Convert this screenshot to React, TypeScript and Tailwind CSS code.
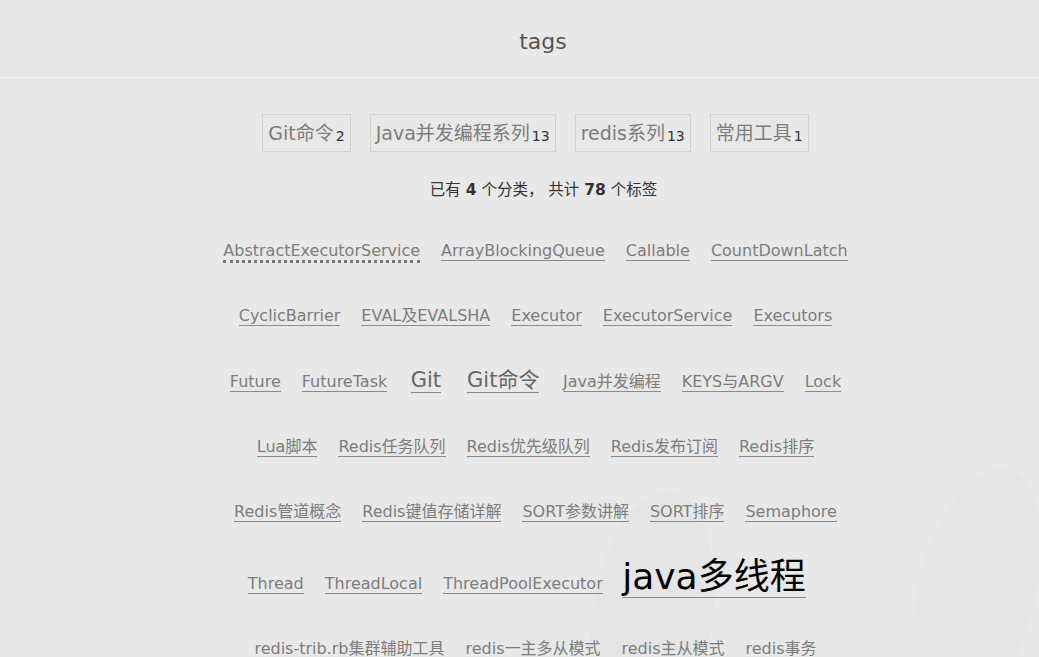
const categories = [
  { name: "Git命令", count: 2 },
  { name: "Java并发编程系列", count: 13 },
  { name: "redis系列", count: 13 },
  { name: "常用工具", count: 1 },
];

type Tag = { name: string; size?: "md" | "lg"; dotted?: boolean };

const tagRows: Tag[][] = [
  [
    { name: "AbstractExecutorService", dotted: true },
    { name: "ArrayBlockingQueue" },
    { name: "Callable" },
    { name: "CountDownLatch" },
  ],
  [
    { name: "CyclicBarrier" },
    { name: "EVAL及EVALSHA" },
    { name: "Executor" },
    { name: "ExecutorService" },
    { name: "Executors" },
  ],
  [
    { name: "Future" },
    { name: "FutureTask" },
    { name: "Git", size: "md" },
    { name: "Git命令", size: "md" },
    { name: "Java并发编程" },
    { name: "KEYS与ARGV" },
    { name: "Lock" },
  ],
  [
    { name: "Lua脚本" },
    { name: "Redis任务队列" },
    { name: "Redis优先级队列" },
    { name: "Redis发布订阅" },
    { name: "Redis排序" },
  ],
  [
    { name: "Redis管道概念" },
    { name: "Redis键值存储详解" },
    { name: "SORT参数讲解" },
    { name: "SORT排序" },
    { name: "Semaphore" },
  ],
  [
    { name: "Thread" },
    { name: "ThreadLocal" },
    { name: "ThreadPoolExecutor" },
    { name: "java多线程", size: "lg" },
  ],
  [
    { name: "redis-trib.rb集群辅助工具" },
    { name: "redis一主多从模式" },
    { name: "redis主从模式" },
    { name: "redis事务" },
  ],
];

function TagLink({ tag }: { tag: Tag }) {
  const sizeClass =
    tag.size === "lg"
      ? "text-[36px] text-black pl-[9px] pr-[28px]"
      : tag.size === "md"
        ? "text-[21px] text-[#666] px-[13px]"
        : "text-[16px] text-[#7d7d7d] px-[10.5px]";
  return (
    <div className={`leading-[65px] ${sizeClass}`}>
      <a
        href="#"
        className={`leading-none ${
          tag.dotted ? "border-b-[3px] border-dotted border-[#777]" : "border-b border-[#8a8a8a]"
        }`}
      >
        {tag.name}
      </a>
    </div>
  );
}

export default function App() {
  return (
    <div
      className="relative min-h-[657px] bg-[#e8e8e8] overflow-hidden"
      style={{ fontFamily: '"DejaVu Sans", "Noto Sans CJK SC", sans-serif' }}
    >
      {/* faint background shapes */}
      <div className="absolute left-[592px] top-[490px] w-[120px] h-[260px] rounded-[50%] bg-[#e5e5e5] rotate-[8deg]" />
      <div className="absolute left-[918px] top-[466px] w-[118px] h-[250px] rounded-[50%] bg-[#e5e5e5] rotate-[14deg]" />

      <header className="relative h-[78px] border-b border-[#f6f6f6] flex items-center justify-center pl-[47px]">
        <h1 className="mt-[6px] text-[22px] text-[#555] font-normal">tags</h1>
      </header>

      <main className="relative pl-[32px] flex flex-col items-center">
        <div className="mt-[36px] flex gap-[19px]">
          {categories.map((c) => (
            <a
              key={c.name}
              href="#"
              className="border border-[#d2d2d2] px-[5px] h-[38px] flex items-center text-[19px] text-[#7d7d7d]"
            >
              {c.name}
              <span className="ml-[2px] text-[14px] text-[#333] self-end mb-[8px] leading-none">
                {c.count}
              </span>
            </a>
          ))}
        </div>

        <p className="mt-[27px] ml-[16px] text-[15.5px] text-[#333]">
          已有 <b className="font-bold">4</b> 个分类， 共计 <b className="font-bold">78</b> 个标签
        </p>

        <div className="mt-[16px] flex flex-col items-center">
          {tagRows.map((row, i) => (
            <div key={i} className="flex items-baseline justify-center">
              {row.map((t) => (
                <TagLink key={t.name} tag={t} />
              ))}
            </div>
          ))}
        </div>
      </main>
    </div>
  );
}
